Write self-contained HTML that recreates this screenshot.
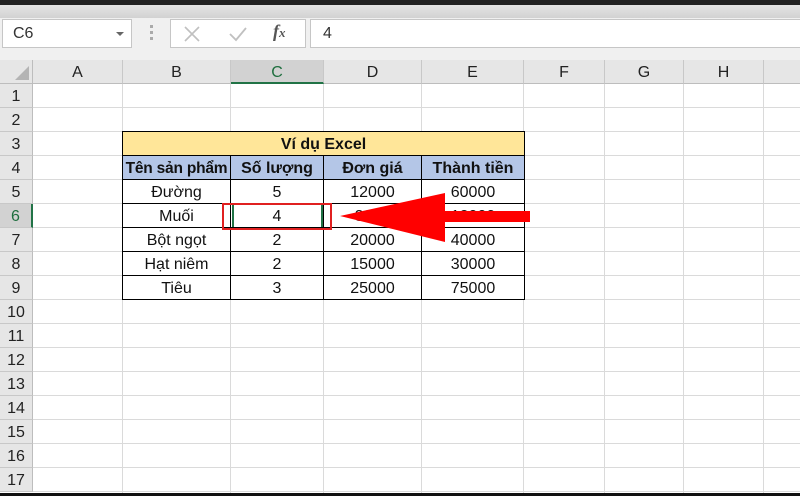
<!DOCTYPE html>
<html><head><meta charset="utf-8"><style>
*{margin:0;padding:0;box-sizing:border-box}
body{width:800px;height:496px;overflow:hidden;background:#fff;font-family:"Liberation Sans",sans-serif;position:relative}
.a{position:absolute}
.ch{position:absolute;top:60px;height:24px;background:#e6e6e6;border-right:1px solid #c8c8c8;border-bottom:1px solid #bdbdbd;text-align:center;font-size:16px;line-height:25px;color:#222}
.rh{position:absolute;left:0;width:33px;height:24px;background:#e6e6e6;border-bottom:1px solid #c8c8c8;border-right:1px solid #bdbdbd;text-align:center;font-size:16px;line-height:25px;color:#222}
.vl{position:absolute;top:84px;bottom:0;width:1px;background:#dadada}
.hl{position:absolute;left:33px;right:0;height:1px;background:#dadada}
.c{position:absolute;text-align:center;font-size:16px;line-height:25px;color:#111;border-right:1px solid #000;border-bottom:1px solid #000;white-space:nowrap;overflow:hidden}
.b{font-weight:bold}
</style></head><body>
<div class="a" style="left:0;top:0;width:800px;height:5px;background:#222"></div>
<div class="a" style="left:0;top:5px;width:800px;height:13px;background:linear-gradient(#e4e4e4,#d2d2d2)"></div>
<div class="a" style="left:0;top:18px;width:800px;height:42px;background:#f0f0f0"></div>
<div class="a" style="left:2px;top:19px;width:130px;height:29px;background:#fff;border:1px solid #c6c6c6;font-size:16px;line-height:27px;padding-left:10px;color:#333">C6</div>
<div class="a" style="left:116px;top:32px;width:0;height:0;border-left:4px solid transparent;border-right:4px solid transparent;border-top:4px solid #666"></div>
<div class="a" style="left:150px;top:25px;width:3px;height:15px;background:repeating-linear-gradient(#aaa 0 3px,transparent 3px 6px)"></div>
<div class="a" style="left:170px;top:19px;width:136px;height:29px;background:#fff;border:1px solid #c6c6c6"></div>
<svg class="a" style="left:183px;top:26px" width="18" height="16"><path d="M2 1L16 15M16 1L2 15" stroke="#c0c0c0" stroke-width="1.6"/></svg>
<svg class="a" style="left:228px;top:26px" width="20" height="16"><path d="M2 8L8 14L18 2" stroke="#c0c0c0" stroke-width="1.8" fill="none"/></svg>
<div class="a" style="left:273px;top:21px;font-family:'Liberation Serif',serif;font-style:italic;font-weight:bold;font-size:18px;color:#555">f<span style="font-size:13px">x</span></div>
<div class="a" style="left:310px;top:19px;width:492px;height:29px;background:#fff;border:1px solid #c6c6c6;font-size:16px;line-height:27px;padding-left:12px;color:#333">4</div>
<div class="a" style="left:0;top:60px;width:33px;height:24px;background:#e6e6e6;border-right:1px solid #bdbdbd;border-bottom:1px solid #bdbdbd"></div>
<div class="a" style="left:15px;top:66px;width:0;height:0;border-left:14px solid transparent;border-bottom:14px solid #b4b4b4"></div>
<div class="ch" style="left:33px;width:90px">A</div>
<div class="ch" style="left:123px;width:108px">B</div>
<div class="ch" style="left:231px;width:93px;background:#d2d2d2;color:#1e6e3e;border-bottom:2px solid #217346">C</div>
<div class="ch" style="left:324px;width:98px">D</div>
<div class="ch" style="left:422px;width:102px">E</div>
<div class="ch" style="left:524px;width:81px">F</div>
<div class="ch" style="left:605px;width:79px">G</div>
<div class="ch" style="left:684px;width:80px">H</div>
<div class="ch" style="left:764px;width:40px"></div>
<div class="rh" style="top:84px">1</div><div class="rh" style="top:108px">2</div><div class="rh" style="top:132px">3</div><div class="rh" style="top:156px">4</div><div class="rh" style="top:180px">5</div><div class="rh" style="top:204px;background:#d2d2d2;color:#1e6e3e;border-right:2px solid #217346">6</div><div class="rh" style="top:228px">7</div><div class="rh" style="top:252px">8</div><div class="rh" style="top:276px">9</div><div class="rh" style="top:300px">10</div><div class="rh" style="top:324px">11</div><div class="rh" style="top:348px">12</div><div class="rh" style="top:372px">13</div><div class="rh" style="top:396px">14</div><div class="rh" style="top:420px">15</div><div class="rh" style="top:444px">16</div><div class="rh" style="top:468px">17</div>
<div class="vl" style="left:122px"></div><div class="vl" style="left:230px"></div><div class="vl" style="left:323px"></div><div class="vl" style="left:421px"></div><div class="vl" style="left:523px"></div><div class="vl" style="left:604px"></div><div class="vl" style="left:683px"></div><div class="vl" style="left:763px"></div>
<div class="hl" style="top:107px"></div><div class="hl" style="top:131px"></div><div class="hl" style="top:155px"></div><div class="hl" style="top:179px"></div><div class="hl" style="top:203px"></div><div class="hl" style="top:227px"></div><div class="hl" style="top:251px"></div><div class="hl" style="top:275px"></div><div class="hl" style="top:299px"></div><div class="hl" style="top:323px"></div><div class="hl" style="top:347px"></div><div class="hl" style="top:371px"></div><div class="hl" style="top:395px"></div><div class="hl" style="top:419px"></div><div class="hl" style="top:443px"></div><div class="hl" style="top:467px"></div><div class="hl" style="top:491px"></div>
<div class="a" style="left:122px;top:131px;width:403px;height:169px;border-left:1px solid #000;border-top:1px solid #000;background:#fff"></div>
<div class="c b" style="left:123px;top:132px;width:402px;height:24px;background:#ffe699">Ví dụ Excel</div>
<div class="c b" style="left:123px;top:156px;width:108px;height:24px;background:#b4c6e7;font-size:15.5px;letter-spacing:-0.2px">Tên sản phẩm</div>
<div class="c b" style="left:231px;top:156px;width:93px;height:24px;background:#b4c6e7">Số lượng</div>
<div class="c b" style="left:324px;top:156px;width:98px;height:24px;background:#b4c6e7">Đơn giá</div>
<div class="c b" style="left:422px;top:156px;width:103px;height:24px;background:#b4c6e7">Thành tiền</div>
<div class="c" style="left:123px;top:180px;width:108px;height:24px">Đường</div><div class="c" style="left:231px;top:180px;width:93px;height:24px">5</div><div class="c" style="left:324px;top:180px;width:98px;height:24px">12000</div><div class="c" style="left:422px;top:180px;width:103px;height:24px">60000</div>
<div class="c" style="left:123px;top:204px;width:108px;height:24px">Muối</div><div class="c" style="left:231px;top:204px;width:93px;height:24px">4</div><div class="c" style="left:324px;top:204px;width:98px;height:24px">3000</div><div class="c" style="left:422px;top:204px;width:103px;height:24px">12000</div>
<div class="c" style="left:123px;top:228px;width:108px;height:24px">Bột ngọt</div><div class="c" style="left:231px;top:228px;width:93px;height:24px">2</div><div class="c" style="left:324px;top:228px;width:98px;height:24px">20000</div><div class="c" style="left:422px;top:228px;width:103px;height:24px">40000</div>
<div class="c" style="left:123px;top:252px;width:108px;height:24px">Hạt niêm</div><div class="c" style="left:231px;top:252px;width:93px;height:24px">2</div><div class="c" style="left:324px;top:252px;width:98px;height:24px">15000</div><div class="c" style="left:422px;top:252px;width:103px;height:24px">30000</div>
<div class="c" style="left:123px;top:276px;width:108px;height:24px">Tiêu</div><div class="c" style="left:231px;top:276px;width:93px;height:24px">3</div><div class="c" style="left:324px;top:276px;width:98px;height:24px">25000</div><div class="c" style="left:422px;top:276px;width:103px;height:24px">75000</div>
<div class="a" style="left:232px;top:204px;width:91px;height:23px;border-left:2px solid #217346;border-right:2px solid #217346"></div>
<div class="a" style="left:222px;top:203px;width:110px;height:27px;border:2px solid #e02020"></div>
<svg class="a" style="left:330px;top:190px" width="205" height="56"><path d="M10 26L115 3L115 21L200 21L200 32L115 32L115 52Z" fill="#f00"/></svg>
<div class="a" style="left:0;top:493px;width:800px;height:3px;background:#111"></div>
</body></html>
